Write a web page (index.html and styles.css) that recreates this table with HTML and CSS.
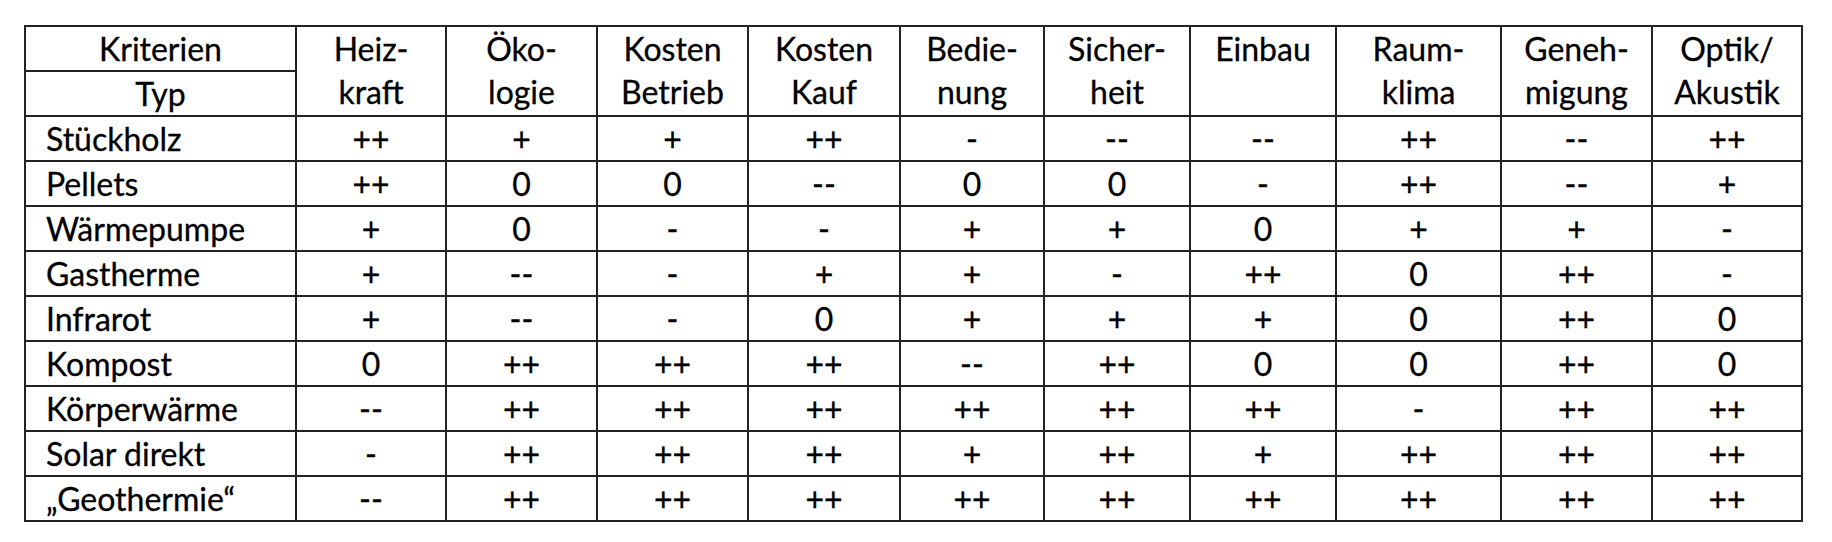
FILE: index.html
```html
<!DOCTYPE html>
<html lang="de">
<head>
<meta charset="utf-8">
<link rel="stylesheet" href="styles.css">
</head>
<body>
<table class="grid">
<colgroup>
<col class="c-typ"><col class="c150"><col class="c151"><col class="c151"><col class="c152"><col class="c144"><col class="c146"><col class="c146"><col class="c165"><col class="c151"><col class="c150">
</colgroup>
<thead>
<tr><th class="corner">Kriterien</th><th rowspan="2">Heiz-<br>kraft</th><th rowspan="2">Öko-<br>logie</th><th rowspan="2">Kosten<br>Betrieb</th><th rowspan="2">Kosten<br>Kauf</th><th rowspan="2">Bedie-<br>nung</th><th rowspan="2">Sicher-<br>heit</th><th rowspan="2">Einbau</th><th rowspan="2">Raum-<br>klima</th><th rowspan="2">Geneh-<br>migung</th><th rowspan="2">Optik/<br>Akustik</th></tr>
<tr><th class="corner">Typ</th></tr>
</thead>
<tbody>
<tr><td class="name">Stückholz</td><td>++</td><td>+</td><td>+</td><td>++</td><td>-</td><td>--</td><td>--</td><td>++</td><td>--</td><td>++</td></tr>
<tr><td class="name">Pellets</td><td>++</td><td>0</td><td>0</td><td>--</td><td>0</td><td>0</td><td>-</td><td>++</td><td>--</td><td>+</td></tr>
<tr><td class="name">Wärmepumpe</td><td>+</td><td>0</td><td>-</td><td>-</td><td>+</td><td>+</td><td>0</td><td>+</td><td>+</td><td>-</td></tr>
<tr><td class="name">Gastherme</td><td>+</td><td>--</td><td>-</td><td>+</td><td>+</td><td>-</td><td>++</td><td>0</td><td>++</td><td>-</td></tr>
<tr><td class="name">Infrarot</td><td>+</td><td>--</td><td>-</td><td>0</td><td>+</td><td>+</td><td>+</td><td>0</td><td>++</td><td>0</td></tr>
<tr><td class="name">Kompost</td><td>0</td><td>++</td><td>++</td><td>++</td><td>--</td><td>++</td><td>0</td><td>0</td><td>++</td><td>0</td></tr>
<tr><td class="name">Körperwärme</td><td>--</td><td>++</td><td>++</td><td>++</td><td>++</td><td>++</td><td>++</td><td>-</td><td>++</td><td>++</td></tr>
<tr><td class="name">Solar direkt</td><td>-</td><td>++</td><td>++</td><td>++</td><td>+</td><td>++</td><td>+</td><td>++</td><td>++</td><td>++</td></tr>
<tr><td class="name">„Geothermie“</td><td>--</td><td>++</td><td>++</td><td>++</td><td>++</td><td>++</td><td>++</td><td>++</td><td>++</td><td>++</td></tr>
</tbody>
</table>
</body>
</html>
```
FILE: styles.css
```css
html, body {
  margin: 0;
  padding: 0;
  background: #ffffff;
}
body {
  padding: 25px 0 0 24px;
  font-family: Lato, "Liberation Sans", sans-serif;
  color: #000;
}
.grid {
  border-collapse: collapse;
  table-layout: fixed;
  width: 1778px;
  font-size: 32px;
}
.c-typ { width: 271px; }
.c150 { width: 150px; }
.c151 { width: 151px; }
.c152 { width: 152px; }
.c144 { width: 144px; }
.c146 { width: 146px; }
.c165 { width: 165px; }
.grid th, .grid td {
  border: 2px solid #222;
  padding: 0;
  text-align: center;
  font-weight: normal;
  line-height: 43px;
  height: 43px;
  -webkit-text-stroke: 0.3px #000;
}
.grid th {
  vertical-align: top;
}
.grid td {
  vertical-align: middle;
}
.grid td.name {
  text-align: left;
  padding-left: 20px;
}
```
